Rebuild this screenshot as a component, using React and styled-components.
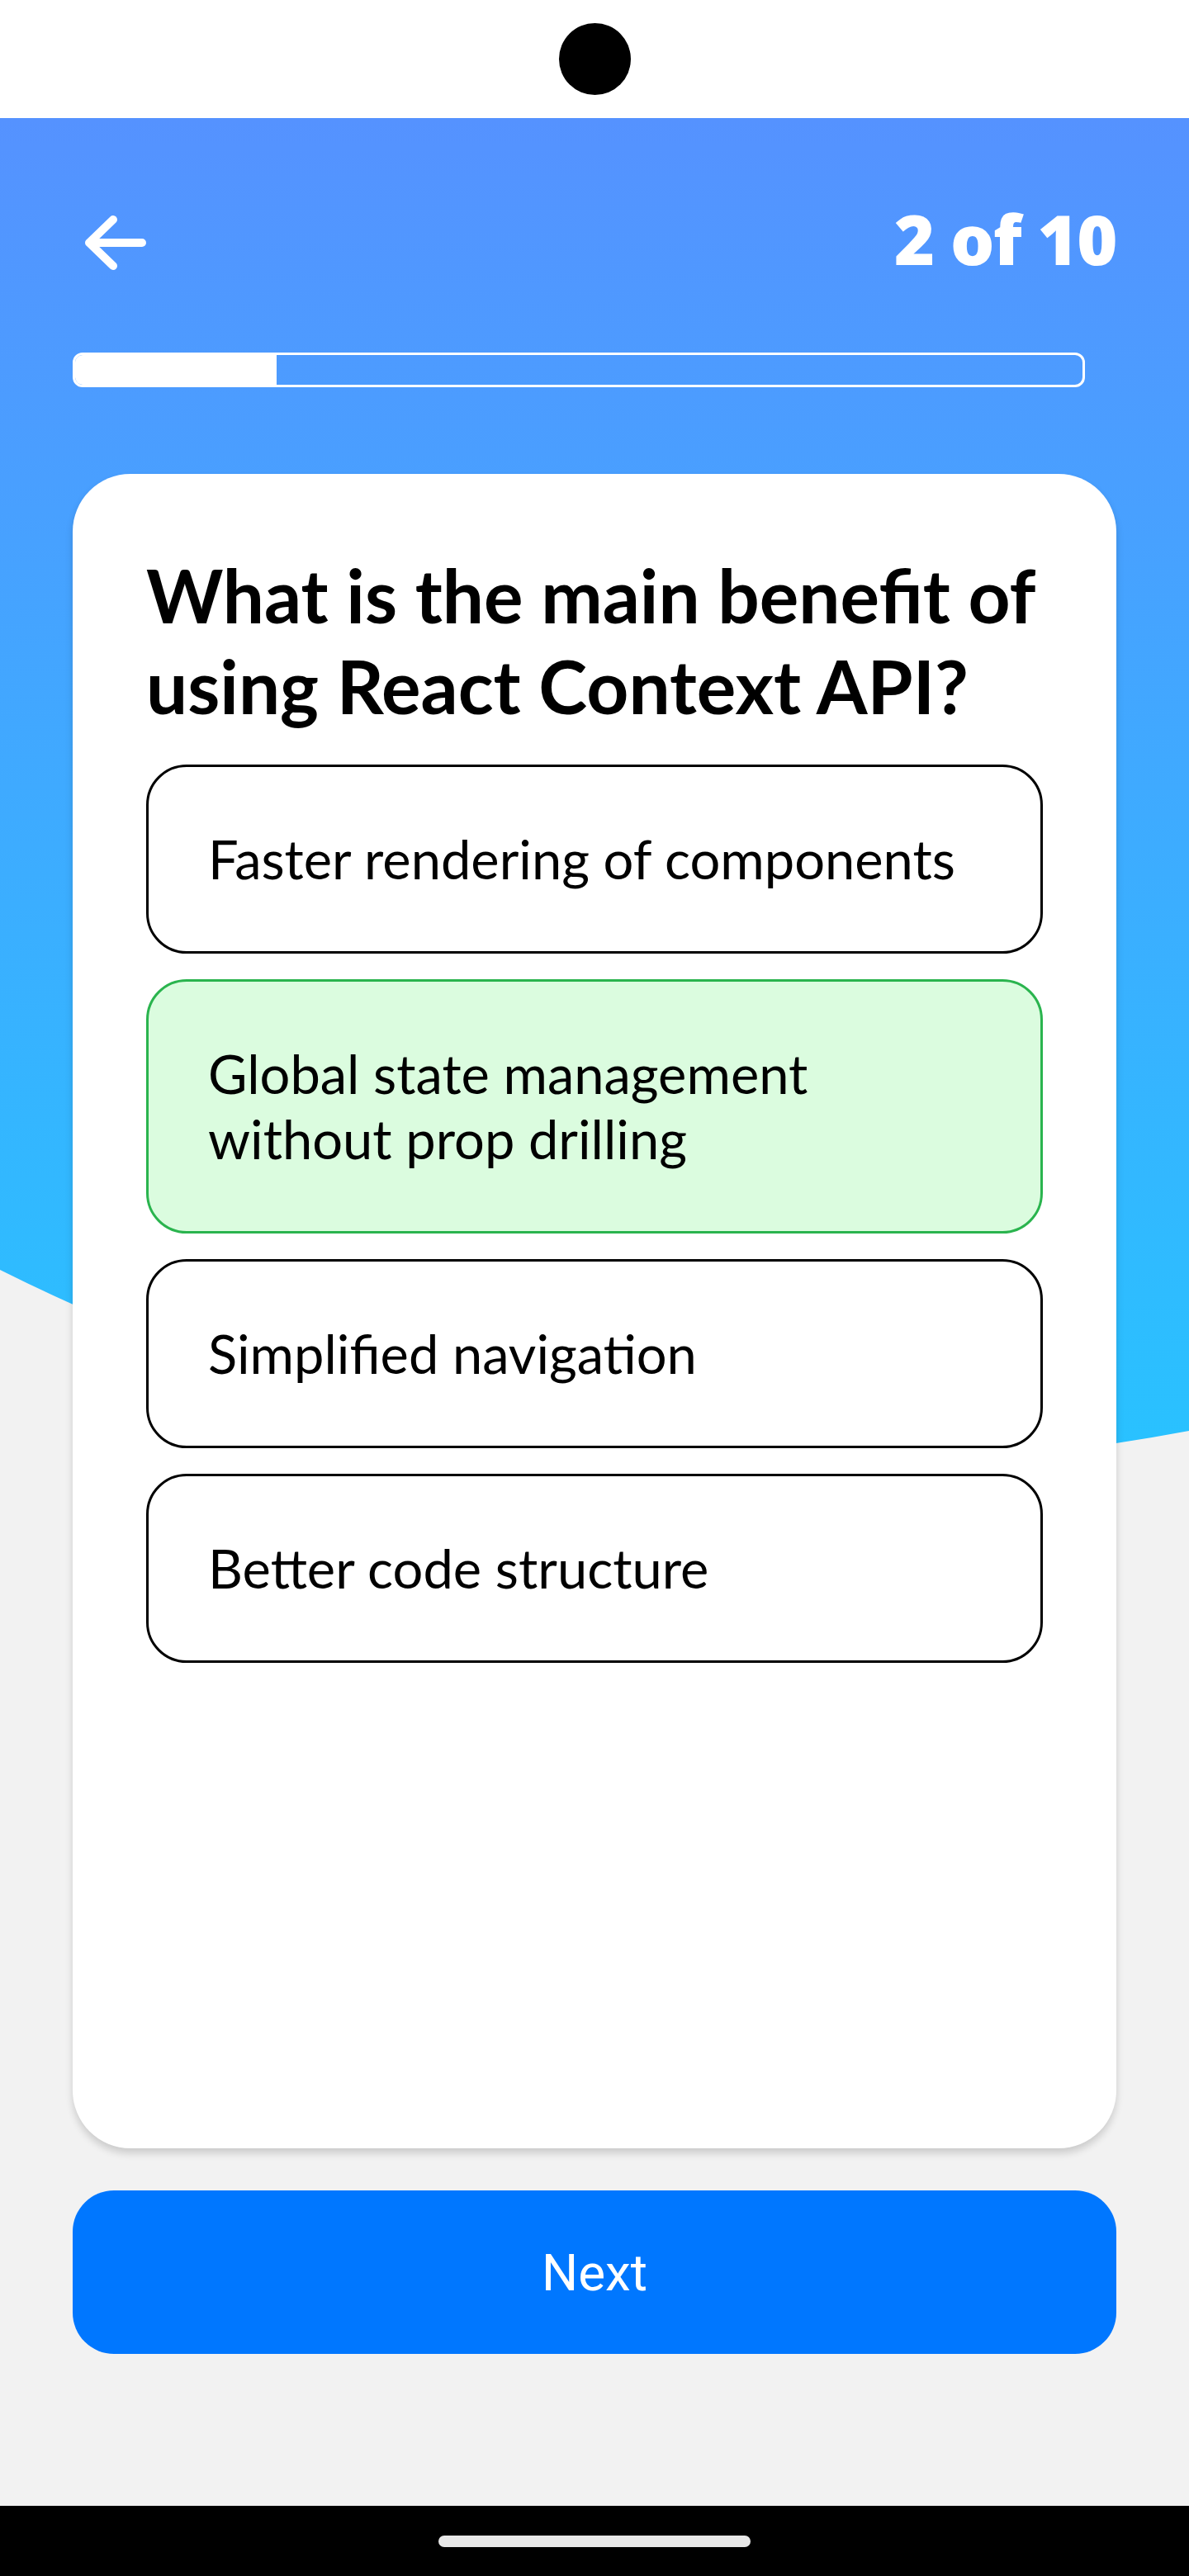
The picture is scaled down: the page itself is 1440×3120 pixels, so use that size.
import React, { useState } from 'react';
import styled, { createGlobalStyle } from 'styled-components';

const GlobalStyle = createGlobalStyle`
  html, body {
    margin: 0;
    padding: 0;
    background: #f2f2f2;
  }
  * {
    box-sizing: border-box;
  }
`;

const Page = styled.div`
  width: 1440px;
  min-height: 3120px;
  display: flex;
  flex-direction: column;
  background: #f2f2f2;
  font-family: Lato, "Noto Sans", sans-serif;
`;

const StatusBar = styled.div`
  height: 143px;
  background: #ffffff;
  display: flex;
  align-items: center;
  justify-content: center;
`;

const Camera = styled.div`
  width: 87px;
  height: 87px;
  border-radius: 50%;
  background: #000000;
`;

const Screen = styled.main`
  position: relative;
  flex: 1;
  display: flex;
  flex-direction: column;
  padding: 101px 88px 184px;
  isolation: isolate;

  /* the blue wave behind the header */
  &::before {
    content: '';
    position: absolute;
    left: 0;
    top: 0;
    width: 1440px;
    height: 1760px;
    z-index: -1;
    background: linear-gradient(180deg, #5592ff 0%, #25c6ff 100%);
    clip-path: path('M0 0 H1440 V1590 Q676 1733 0 1395 Z');
  }
`;

const Header = styled.div`
  height: 100px;
  display: flex;
  align-items: center;
  justify-content: space-between;
`;

const BackButton = styled.button`
  width: 90px;
  height: 90px;
  margin-left: 10px;
  padding: 0;
  border: none;
  background: transparent;
  display: flex;
  cursor: pointer;
`;

const Counter = styled.span`
  padding-bottom: 10px;
  font-family: "Open Sans", sans-serif;
  font-weight: 800;
  font-size: 84px;
  line-height: 1;
  color: #ffffff;
  letter-spacing: -1.5px;
`;

const Progress = styled.div`
  width: 1226px;
  height: 42px;
  margin-top: 83px;
  border: 3px solid #ffffff;
  border-radius: 12px;
  overflow: hidden;
  display: flex;
`;

const ProgressFill = styled.div`
  height: 100%;
  background: #ffffff;
`;

const Card = styled.section`
  flex: 1;
  margin-top: 105px;
  background: #ffffff;
  border-radius: 70px;
  box-shadow: 0 6px 10px rgba(0, 0, 0, 0.16);
  padding: 92px 89px 0;
  display: flex;
  flex-direction: column;
`;

const Question = styled.h1`
  margin: 0 0 40px;
  font-family: Lato, sans-serif;
  font-weight: 700;
  font-size: 89px;
  line-height: 110px;
  color: #000000;
`;

const Options = styled.div`
  display: flex;
  flex-direction: column;
  gap: 31px;
`;

const Option = styled.button`
  width: 100%;
  text-align: left;
  padding: 72px 72px;
  border: 3px solid ${p => (p.selected ? '#2ab44e' : '#000000')};
  border-radius: 49px;
  background: ${p => (p.selected ? '#dbfcdf' : '#ffffff')};
  font-family: Lato, sans-serif;
  font-weight: 400;
  font-size: 65px;
  line-height: 79px;
  color: #000000;
  cursor: pointer;
`;

const NextButton = styled.button`
  height: 198px;
  margin-top: 51px;
  border: none;
  border-radius: 50px;
  background: #0077ff;
  color: #ffffff;
  font-family: Roboto, sans-serif;
  font-size: 62px;
  font-weight: 400;
  cursor: pointer;
`;

const NavBar = styled.div`
  height: 85px;
  background: #000000;
  display: flex;
  align-items: center;
  justify-content: center;
`;

const HomeIndicator = styled.div`
  width: 378px;
  height: 14px;
  border-radius: 7px;
  background: #e8e8e8;
`;

const BackArrow = () => (
  <svg width="90" height="90" viewBox="0 0 90 90" fill="none">
    <path
      d="M74 45 H10 M39 17 L10 45 L39 73"
      stroke="#ffffff"
      strokeWidth="10"
      strokeLinecap="round"
      strokeLinejoin="round"
    />
  </svg>
);

const answers = [
  'Faster rendering of components',
  'Global state management without prop drilling',
  'Simplified navigation',
  'Better code structure',
];

const App = () => {
  const [selected, setSelected] = useState(1);
  const current = 2;
  const total = 10;

  return (
    <Page>
      <GlobalStyle />
      <StatusBar>
        <Camera />
      </StatusBar>

      <Screen>
        <Header>
          <BackButton aria-label="Back">
            <BackArrow />
          </BackButton>
          <Counter>{current} of {total}</Counter>
        </Header>

        <Progress>
          <ProgressFill style={{ width: `${(current / total) * 100}%` }} />
        </Progress>

        <Card>
          <Question>What is the main benefit of using React Context API?</Question>
          <Options>
            {answers.map((text, i) => (
              <Option key={text} selected={i === selected} onClick={() => setSelected(i)}>
                {text}
              </Option>
            ))}
          </Options>
        </Card>

        <NextButton>Next</NextButton>
      </Screen>

      <NavBar>
        <HomeIndicator />
      </NavBar>
    </Page>
  );
};

export default App;
